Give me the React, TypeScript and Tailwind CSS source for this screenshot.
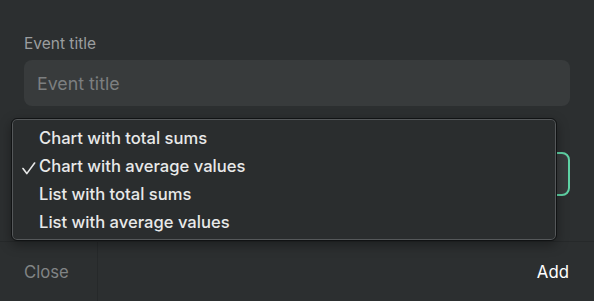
const options = [
  'Chart with total sums',
  'Chart with average values',
  'List with total sums',
  'List with average values',
]

export default function App() {
  const selected = 1

  return (
    <div
      className="relative w-[594px] h-[301px] bg-[#2c2f30] flex flex-col overflow-hidden"
      style={{ fontFamily: 'Inter, "Open Sans", sans-serif' }}
    >
      <div className="flex-1 px-6 pt-[35px]">
        <label className="block text-[15.5px] leading-[18px] text-[#9b9e9f]">Event title</label>
        <input
          placeholder="Event title"
          className="mt-[7px] w-full h-[46px] rounded-lg bg-[#383b3c] px-[13px] text-[17.8px] text-white placeholder:text-[#7c7f80] outline-none"
        />
        {/* select hidden under the open menu */}
        <div className="mt-[46px] h-[44px] w-full rounded-lg border-2 border-[#5fd3a5] bg-[#383b3c]" />
      </div>

      {/* Footer */}
      <div className="h-[60px] flex border-t border-[#26292a]">
        <button className="w-[98px] border-r border-[#26292a] pl-6 pt-[2px] text-left text-[16.7px] text-[#818485]">
          Close
        </button>
        <div className="flex-1" />
        <button className="pr-[25px] pt-[2px] text-[16.8px] text-white">Add</button>
      </div>

      {/* Open dropdown menu */}
      <div className="absolute left-[11px] top-[118px] w-[546px] h-[123px] rounded-md bg-[#2a2d2e] border border-[#111314] shadow-[inset_0_0_0_1px_#55585a,0_4px_12px_rgba(0,0,0,0.35)] pt-[5px]">
        {options.map((opt, i) => (
          <div key={opt} className="relative h-[28px] flex items-center pl-[27px] text-[16.6px] font-medium text-[#e8e9e9]">
            {i === selected && (
              <svg width="14" height="13" viewBox="0 0 14 13" className="absolute left-[10px] top-[10px]" fill="none">
                <path d="M1 6.5 L4.8 11.6 L12.6 1" stroke="#e8e9e9" strokeWidth="1.6" strokeLinecap="round" strokeLinejoin="round" />
              </svg>
            )}
            {opt}
          </div>
        ))}
      </div>
    </div>
  )
}
